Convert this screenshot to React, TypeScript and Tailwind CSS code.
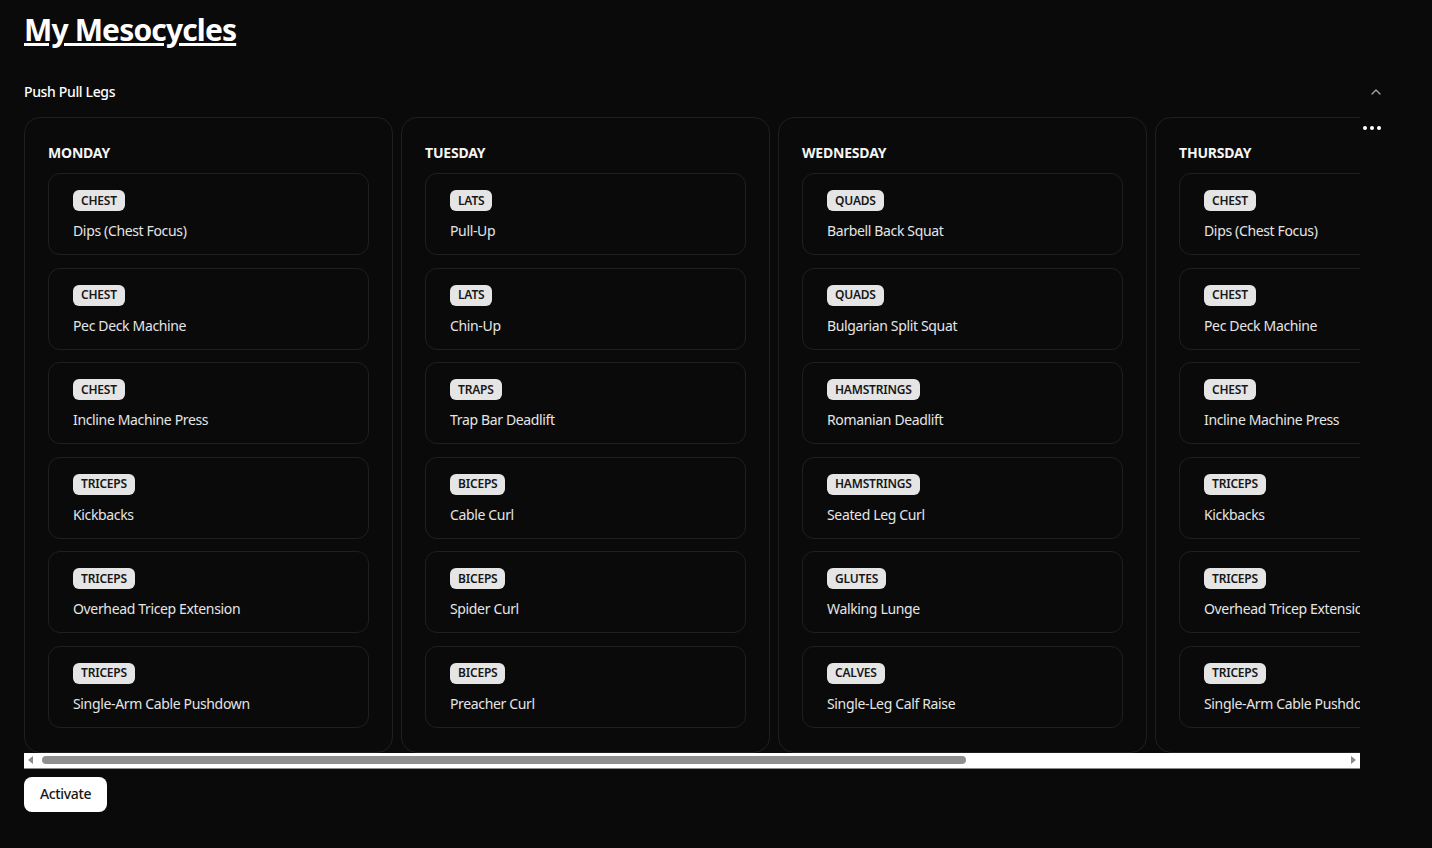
import { ChevronUp } from 'lucide-react';

type Exercise = { muscle: string; name: string };
type Day = { day: string; exercises: Exercise[] };

const push: Exercise[] = [
    { muscle: 'Chest', name: 'Dips (Chest Focus)' },
    { muscle: 'Chest', name: 'Pec Deck Machine' },
    { muscle: 'Chest', name: 'Incline Machine Press' },
    { muscle: 'Triceps', name: 'Kickbacks' },
    { muscle: 'Triceps', name: 'Overhead Tricep Extension' },
    { muscle: 'Triceps', name: 'Single-Arm Cable Pushdown' },
];

const pull: Exercise[] = [
    { muscle: 'Lats', name: 'Pull-Up' },
    { muscle: 'Lats', name: 'Chin-Up' },
    { muscle: 'Traps', name: 'Trap Bar Deadlift' },
    { muscle: 'Biceps', name: 'Cable Curl' },
    { muscle: 'Biceps', name: 'Spider Curl' },
    { muscle: 'Biceps', name: 'Preacher Curl' },
];

const legs: Exercise[] = [
    { muscle: 'Quads', name: 'Barbell Back Squat' },
    { muscle: 'Quads', name: 'Bulgarian Split Squat' },
    { muscle: 'Hamstrings', name: 'Romanian Deadlift' },
    { muscle: 'Hamstrings', name: 'Seated Leg Curl' },
    { muscle: 'Glutes', name: 'Walking Lunge' },
    { muscle: 'Calves', name: 'Single-Leg Calf Raise' },
];

const days: Day[] = [
    { day: 'Monday', exercises: push },
    { day: 'Tuesday', exercises: pull },
    { day: 'Wednesday', exercises: legs },
    { day: 'Thursday', exercises: push },
    { day: 'Friday', exercises: pull },
];

function DayColumn({ day }: { day: Day }) {
    return (
        <div className="w-[369px] shrink-0 rounded-2xl border border-[#1f1f1f] px-[23px] pb-6 pt-[25px]">
            <h3 className="mb-[10px] text-sm font-bold uppercase leading-5 tracking-[-0.2px] text-[#f5f5f5]">{day.day}</h3>
            <div className="flex flex-col gap-[12.6px]">
                {day.exercises.map((ex, i) => (
                    <div key={i} className="flex flex-col items-start gap-2 rounded-xl border border-[#1f1f1f] px-6 pb-[11px] pt-4">
                        <span className="flex h-[21px] items-center rounded-md bg-[#e5e5e5] px-2 text-xs font-semibold uppercase leading-4 tracking-[-0.2px] text-[#171717]">
                            {ex.muscle}
                        </span>
                        <p className="whitespace-nowrap text-sm leading-6 tracking-[-0.35px] text-[#e5e5e5]">{ex.name}</p>
                    </div>
                ))}
            </div>
        </div>
    );
}

export default function App() {
    return (
        <div
            className="min-h-screen bg-[#0a0a0a] pl-6 pr-12 pt-3 text-white"
            style={{ fontFamily: '"Noto Sans", sans-serif' }}
        >
            <h1 className="mb-[18px] text-3xl font-bold leading-9 tracking-[-0.85px] underline">My Mesocycles</h1>

            <div>
                <button className="flex w-full items-center justify-between pb-[15px] pt-4 text-sm font-medium leading-5 tracking-[-0.35px]">
                    <span>Push Pull Legs</span>
                    <ChevronUp size={16} className="text-[#a3a3a3]" />
                </button>

                <div className="flex items-start">
                    <div className="min-w-0 flex-1">
                        <div className="overflow-hidden">
                            <div className="flex w-max gap-2">
                                {days.map((d) => (
                                    <DayColumn key={d.day} day={d} />
                                ))}
                            </div>
                        </div>
                        {/* scrollbar */}
                        <div className="flex h-4 items-center border-b border-[#8a8a8a] bg-white">
                            <svg width="14" height="14" viewBox="0 0 14 14" className="shrink-0">
                                <path d="M9 3 L4 7 L9 11 Z" fill="#8a8a8a" />
                            </svg>
                            <div className="ml-[4px] h-2 w-[924px] rounded-full bg-[#8f8f8f]" />
                            <div className="flex-1" />
                            <svg width="14" height="14" viewBox="0 0 14 14" className="shrink-0">
                                <path d="M5 3 L10 7 L5 11 Z" fill="#8a8a8a" />
                            </svg>
                        </div>
                    </div>
                    <button className="flex h-[22px] w-6 shrink-0 items-center justify-center gap-[3px]">
                        <span className="h-1 w-1 rounded-full bg-white" />
                        <span className="h-1 w-1 rounded-full bg-white" />
                        <span className="h-1 w-1 rounded-full bg-white" />
                    </button>
                </div>

                <button className="mt-2 rounded-lg bg-white px-4 py-[7.5px] text-sm font-medium leading-5 tracking-[-0.35px] text-[#171717]">
                    Activate
                </button>
            </div>
        </div>
    );
}
